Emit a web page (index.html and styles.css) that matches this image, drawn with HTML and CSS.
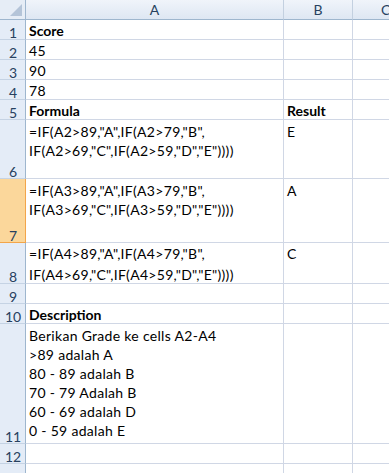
FILE: index.html
```html
<!DOCTYPE html>
<html>
<head>
<meta charset="utf-8">
<link rel="stylesheet" href="styles.css">
</head>
<body>
<div class="sheet">
  <div class="corner"><span class="tri"></span></div>
  <div class="colhead">A</div>
  <div class="colhead">B</div>
  <div class="colhead colc">C</div>

  <div class="rowhead">1</div><div class="cell b">Score</div><div class="cell"></div><div class="cell last"></div>
  <div class="rowhead">2</div><div class="cell">45</div><div class="cell"></div><div class="cell last"></div>
  <div class="rowhead">3</div><div class="cell">90</div><div class="cell"></div><div class="cell last"></div>
  <div class="rowhead">4</div><div class="cell">78</div><div class="cell"></div><div class="cell last"></div>
  <div class="rowhead">5</div><div class="cell b">Formula</div><div class="cell b">Result</div><div class="cell last"></div>
  <div class="rowhead">6</div><div class="cell wrap">=IF(A2&gt;89,"A",IF(A2&gt;79,"B",<br>IF(A2&gt;69,"C",IF(A2&gt;59,"D","E"))))</div><div class="cell wrap">E</div><div class="cell last"></div>
  <div class="rowhead sel">7</div><div class="cell wrap">=IF(A3&gt;89,"A",IF(A3&gt;79,"B",<br>IF(A3&gt;69,"C",IF(A3&gt;59,"D","E"))))</div><div class="cell wrap">A</div><div class="cell last"></div>
  <div class="rowhead">8</div><div class="cell wrap r8">=IF(A4&gt;89,"A",IF(A4&gt;79,"B",<br>IF(A4&gt;69,"C",IF(A4&gt;59,"D","E"))))</div><div class="cell wrap r8">C</div><div class="cell last"></div>
  <div class="rowhead">9</div><div class="cell"></div><div class="cell"></div><div class="cell last"></div>
  <div class="rowhead">10</div><div class="cell b">Description</div><div class="cell"></div><div class="cell last"></div>
  <div class="rowhead">11</div><div class="cell wrap">Berikan Grade ke cells A2-A4<br>&gt;89 adalah A<br>80 - 89 adalah B<br>70 - 79 Adalah B<br>60 - 69 adalah D<br>0 - 59 adalah E</div><div class="cell"></div><div class="cell last"></div>
  <div class="rowhead">12</div><div class="cell"></div><div class="cell"></div><div class="cell last"></div>
  <div class="rowhead"></div><div class="cell"></div><div class="cell"></div><div class="cell last"></div>
</div>
</body>
</html>
```
FILE: styles.css
```css
html, body {
  margin: 0;
  padding: 0;
  background: #ffffff;
  overflow: hidden;
}
.sheet {
  display: grid;
  grid-template-columns: 26px 258px 69px 36px;
  grid-template-rows: 20px 20px 20px 20px 20px 20px 59px 64px 41px 20px 20px 120px 20px 20px;
  font-family: Lato, "Open Sans", sans-serif;
  font-size: 14px;
  color: #000;
  width: 389px;
  overflow: hidden;
}
.corner {
  position: relative;
  background: #e6edf6;
  border-right: 1px solid #9eb6ce;
  border-bottom: 1px solid #9eb6ce;
}
.tri {
  position: absolute;
  right: 3px;
  bottom: 3px;
  width: 0;
  height: 0;
  border-left: 12px solid transparent;
  border-bottom: 12px solid #b4c4d8;
}
.colhead {
  background: linear-gradient(#f0f4fa, #dee7f3);
  border-right: 1px solid #c3d0e0;
  border-bottom: 1px solid #9eb6ce;
  color: #27415f;
  text-align: center;
  line-height: 19px;
  font-size: 14px;
}
.colc {
  text-align: left;
  padding-left: 28px;
  border-right: none;
}
.rowhead {
  background: #e4ecf7;
  border-right: 1px solid #9eb6ce;
  border-bottom: 1px solid #c5d3e4;
  color: #27415f;
  display: flex;
  align-items: flex-end;
  justify-content: center;
  line-height: 13px;
  font-size: 14px;
  padding-left: 1px;
}
.rowhead.sel {
  background: #fbd79b;
  border-right-color: #f2a54a;
  border-bottom-color: #f2a54a;
}
.cell {
  border-right: 1px solid #d0d7e5;
  border-bottom: 1px solid #d0d7e5;
  padding: 1px 0 0 3px;
  line-height: 20px;
  white-space: nowrap;
  letter-spacing: 0.3px;
}
.cell.last {
  border-right: none;
}
.wrap {
  padding-top: 2px;
  line-height: 19px;
}
.wrap.r8 {
  padding-top: 0;
  line-height: 21px;
}
.b {
  font-weight: bold;
  letter-spacing: 0;
}
```
